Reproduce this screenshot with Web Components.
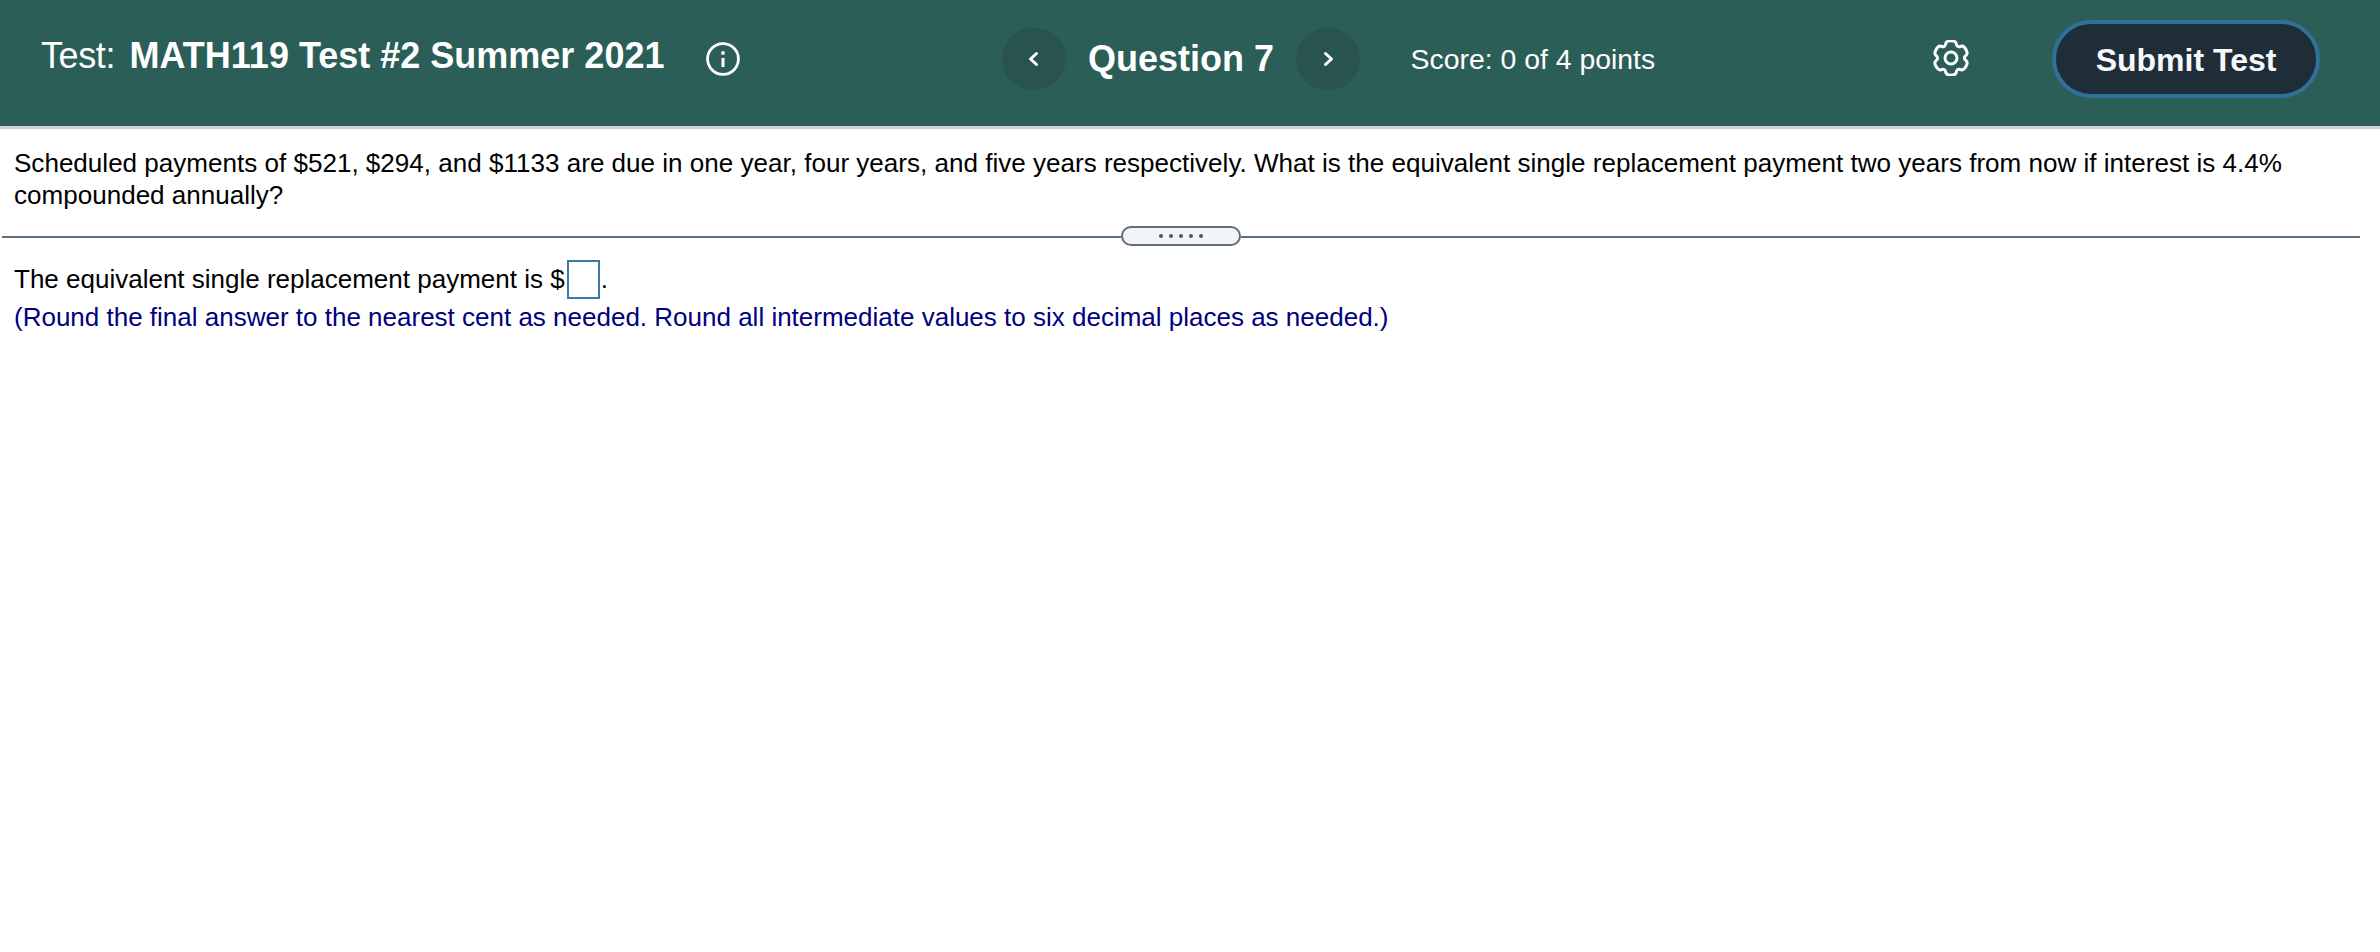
<!DOCTYPE html>
<html lang="en"><head><meta charset="utf-8"><title>Test</title>
<style>
html,body{margin:0;padding:0;background:#fff;font-family:"Liberation Sans",Arial,sans-serif;}
</style></head><body>
<test-header>
  <span slot="label">Test:</span>
  <span slot="title">MATH119 Test #2 Summer 2021</span>
  <span slot="question">Question 7</span>
  <span slot="score">Score: 0 of 4 points</span>
</test-header>
<question-stem>Scheduled payments of $521, $294, and $1133 are due in one year, four years, and five years respectively. What is the equivalent single replacement payment two years from now if interest is 4.4% compounded annually?</question-stem>
<pane-splitter></pane-splitter>
<answer-pane>
  <span>The equivalent single replacement payment is $</span>
  <span slot="note">(Round the final answer to the nearest cent as needed. Round all intermediate values to six decimal places as needed.)</span>
</answer-pane>
<script>
function def(name, html){
  customElements.define(name, class extends HTMLElement{
    constructor(){super();this.attachShadow({mode:'open'}).innerHTML=html;}
  });
}
function gearPath(){
  const c=18,pts=[];
  const P=(a,r)=>[c+r*Math.cos(a*Math.PI/180),c+r*Math.sin(a*Math.PI/180)];
  for(let i=0;i<6;i++){
    const a=-90+i*60;
    pts.push(P(a-25,13.4),P(a-15,17.8),P(a+15,17.8),P(a+25,13.4));
  }
  const n=pts.length,mid=(p,q)=>[(p[0]+q[0])/2,(p[1]+q[1])/2];
  const f=p=>p[0].toFixed(2)+' '+p[1].toFixed(2);
  let d='M'+f(mid(pts[n-1],pts[0]));
  for(let i=0;i<n;i++){d+='Q'+f(pts[i])+' '+f(mid(pts[i],pts[(i+1)%n]));}
  return d+'Z';
}
customElements.define('nav-arrow', class extends HTMLElement{
  constructor(){super();
    const d=this.getAttribute('dir')==='next'?'M4.5 4.5 10.5 10 4.5 15.5':'M9.5 4.5 3.5 10 9.5 15.5';
    this.attachShadow({mode:'open'}).innerHTML=`<style>
:host{display:flex;width:64px;height:62px;border-radius:50%;background:#29534f;align-items:center;justify-content:center;flex:none}
svg{display:block}</style>
<svg width="14" height="20" viewBox="0 0 14 20" fill="none" stroke="#fff" stroke-width="3" stroke-linecap="round" stroke-linejoin="round"><path d="${d}"/></svg>`;
  }
});
def('test-header',`<style>
:host{display:flex;box-sizing:border-box;height:129px;background:#2b5e57;border-bottom:3px solid #cdcfdd;align-items:center;color:#fff;padding:0 60px 8px 41px;font-family:"Liberation Sans",Arial,sans-serif}
.lab{font-size:36px;margin-right:14.5px;letter-spacing:-.4px;position:relative;top:-3px}
.title{font-size:36px;font-weight:700;white-space:nowrap;width:536px;position:relative;top:-3px}
.info{margin-left:40.5px;flex:none;display:block}
.nav{display:flex;align-items:center;margin-left:261.5px}
.q{font-size:36px;font-weight:700;margin:0 21.5px 0 22.5px;white-space:nowrap;width:186px}
.score{font-size:28.4px;margin-left:51px;white-space:nowrap}
.gear{margin-left:auto;flex:none;display:block;position:relative;top:-1px}
.sub{margin-left:83px;box-sizing:border-box;width:268px;height:78px;border:4px solid #2f7199;border-radius:39px;background:#1f2d38;display:flex;align-items:center;justify-content:center;font-size:32px;font-weight:700;color:#f7f8fa;padding-top:2px}
</style>
<span class="lab"><slot name="label"></slot></span>
<span class="title"><slot name="title"></slot></span>
<svg class="info" width="34" height="34" viewBox="0 0 34 34" fill="none" stroke="#fff" stroke-width="2.8"><circle cx="17" cy="17" r="15.4"/><path d="M17 16v9" stroke-width="3"/><circle cx="17" cy="11" r="1.9" fill="#fff" stroke="none"/></svg>
<div class="nav"><nav-arrow dir="prev"></nav-arrow><span class="q"><slot name="question"></slot></span><nav-arrow dir="next"></nav-arrow></div>
<span class="score"><slot name="score"></slot></span>
<svg class="gear" width="36" height="36" viewBox="0 0 36 36" fill="none" stroke="#fff" stroke-width="3" stroke-linejoin="round"><path d="${gearPath()}"/><circle cx="18" cy="18" r="6"/></svg>
<div class="sub">Submit Test</div>`);
def('question-stem',`<style>
:host{display:block;padding:18px 14px 0 14px;font-size:26.05px;line-height:32px;color:#000;height:72px;font-family:"Liberation Sans",Arial,sans-serif}
</style><slot></slot>`);
def('pane-splitter',`<style>
:host{display:flex;align-items:center;height:20px;margin:7px 20px 0 2px}
.l{flex:1;height:2px;background:#5f6e7c;position:relative;top:1px}
.p{box-sizing:border-box;width:120px;height:20px;border:2px solid #5f6e7c;border-radius:10px;background:#f3f4f6;display:flex;align-items:center;justify-content:center;gap:6px;flex:none}
i{width:4px;height:4px;border-radius:50%;background:#4a5560;display:block}
</style><div class="l"></div><div class="p"><i></i><i></i><i></i><i></i><i></i></div><div class="l"></div>`);
def('answer-pane',`<style>
:host{display:block;padding:14px 14px 0 14px;font-size:26px;color:#000;font-family:"Liberation Sans",Arial,sans-serif}
.a{display:flex;align-items:center;height:39px}
.box{box-sizing:border-box;width:33px;height:39px;border:2px solid #3a7ca5;background:#fff;margin-left:2px;margin-right:1px;flex:none}
.n{color:#000080;line-height:32px;margin-top:2px}
</style><div class="a"><slot></slot><span class="box"></span><span>.</span></div><div class="n"><slot name="note"></slot></div>`);
</script>
</body></html>
